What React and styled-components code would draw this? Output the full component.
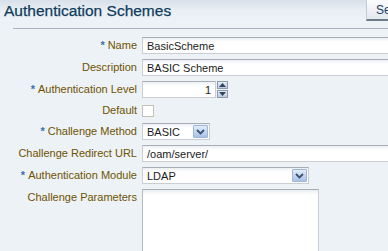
import React from 'react';
import styled, { createGlobalStyle } from 'styled-components';

const Global = createGlobalStyle`
  html, body {
    margin: 0;
    padding: 0;
    background: #edf2f7;
    overflow: hidden;
  }
  body {
    font-family: "Liberation Sans", Arial, sans-serif;
    font-size: 11px;
  }
`;

const Page = styled.div`
  width: 388px;
  height: 251px;
  overflow: hidden;
  background: #edf2f7;
`;

const Header = styled.div`
  height: 28px;
  display: flex;
  justify-content: space-between;
  align-items: flex-start;
  background: linear-gradient(#d8e0ea 0px, #e9eef4 10px, #edf2f7 20px);
`;

const Title = styled.h1`
  margin: 0;
  padding: 1px 0 0 4px;
  font-size: 15.5px;
  line-height: 20px;
  font-weight: normal;
  color: #0f3b5c;
  -webkit-text-stroke: 0.25px #0f3b5c;
`;

const TopButton = styled.button`
  width: 22px;
  height: 21px;
  margin: 0;
  padding: 0 0 0 9px;
  text-align: left;
  font-family: "Liberation Sans", Arial, sans-serif;
  font-size: 12px;
  color: #1c3d5e;
  background: linear-gradient(#fbfcfd, #e3e8ee);
  border: none;
  border-left: 1px solid #c2cad3;
  border-bottom: 2px solid #6d7a88;
  white-space: nowrap;
  overflow: hidden;
`;

const Separator = styled.div`
  height: 1px;
  margin-left: 13px;
  background: #aab3bf;
`;

const Form = styled.div`
  display: grid;
  grid-template-columns: 137px 1fr;
  column-gap: 5px;
  row-gap: 5px;
  padding-top: 8px;
`;

const Label = styled.div`
  text-align: right;
  color: #6e5300;
  white-space: nowrap;
  line-height: ${p => p.$h || 17}px;
  height: ${p => p.$h || 17}px;
  align-self: start;
`;

const Star = styled.span`
  color: #3a6fae;
  margin-right: 3px;
  font-weight: bold;
`;

const Field = styled.div`
  display: flex;
  align-items: center;
  height: ${p => p.$h || 17}px;
  min-width: 0;
`;

const Box = styled.div`
  box-sizing: border-box;
  width: ${p => p.$w}px;
  flex: none;
  height: ${p => p.$h || 17}px;
  display: flex;
  align-items: center;
  justify-content: ${p => (p.$right ? 'flex-end' : 'flex-start')};
  padding: 0 4px;
  background: linear-gradient(#eceff2 0px, #ffffff 4px);
  border: 1px solid #c9ced5;
  border-top-color: #a8aeb6;
  color: #1b1b1b;
  white-space: nowrap;
  overflow: hidden;
`;

const Spinner = styled.div`
  display: flex;
  flex-direction: column;
  margin-left: 1px;
  height: 17px;
`;

const SpinBtn = styled.div`
  box-sizing: border-box;
  width: 11px;
  height: 8px;
  display: flex;
  align-items: center;
  justify-content: center;
  background: linear-gradient(#e6edf5, #bccbdd);
  border: 1px solid #8c9aab;
  margin-bottom: ${p => (p.$up ? '1px' : '0')};
`;

const Check = styled.div`
  width: 12px;
  height: 12px;
  box-sizing: border-box;
  border: 1px solid #c3c2b6;
  background: #fff;
`;

const SelectBox = styled(Box)`
  padding-right: 1px;
  justify-content: space-between;
`;

const DropBtn = styled.div`
  box-sizing: border-box;
  width: 15px;
  height: 13px;
  display: flex;
  align-items: center;
  justify-content: center;
  background: linear-gradient(#e2ebf8, #a9c1e8);
  border: 1px solid #9fb5d6;
  border-radius: 1px;
`;

const TextArea = styled.div`
  box-sizing: border-box;
  width: 177px;
  height: 80px;
  background: linear-gradient(#eaedf0 0px, #ffffff 5px);
  border: 1px solid #c9ced5;
  border-top-color: #a8aeb6;
  border-left-color: #b5bbc3;
`;

const Chevron = () => (
  <svg width="9" height="6" viewBox="0 0 9 6">
    <path d="M1 1 L4.5 4.5 L8 1" fill="none" stroke="#3b5170" strokeWidth="1.8" />
  </svg>
);

const Arrow = ({ up }) => (
  <svg width="7" height="4" viewBox="0 0 7 4">
    <path d={up ? 'M0 4 L3.5 0 L7 4 Z' : 'M0 0 L3.5 4 L7 0 Z'} fill="#2f4560" />
  </svg>
);

const Req = ({ children }) => (
  <>
    <Star>*</Star>
    {children}
  </>
);

export default function App() {
  return (
    <Page>
      <Global />
      <Header>
        <Title>Authentication Schemes</Title>
        <TopButton>Search</TopButton>
      </Header>
      <Separator />
      <Form>
        <Label><Req>Name</Req></Label>
        <Field><Box $w={300}>BasicScheme</Box></Field>

        <Label>Description</Label>
        <Field><Box $w={300}>BASIC Scheme</Box></Field>

        <Label><Req>Authentication Level</Req></Label>
        <Field>
          <Box $w={74} $right>1</Box>
          <Spinner>
            <SpinBtn $up><Arrow up /></SpinBtn>
            <SpinBtn><Arrow /></SpinBtn>
          </Spinner>
        </Field>

        <Label $h={15}>Default</Label>
        <Field $h={15}><Check /></Field>

        <Label><Req>Challenge Method</Req></Label>
        <Field>
          <SelectBox $w={68}>
            BASIC
            <DropBtn><Chevron /></DropBtn>
          </SelectBox>
        </Field>

        <Label>Challenge Redirect URL</Label>
        <Field><Box $w={300}>/oam/server/</Box></Field>

        <Label><Req>Authentication Module</Req></Label>
        <Field>
          <SelectBox $w={167}>
            LDAP
            <DropBtn><Chevron /></DropBtn>
          </SelectBox>
        </Field>

        <Label>Challenge Parameters</Label>
        <Field $h={80}><TextArea /></Field>
      </Form>
    </Page>
  );
}
